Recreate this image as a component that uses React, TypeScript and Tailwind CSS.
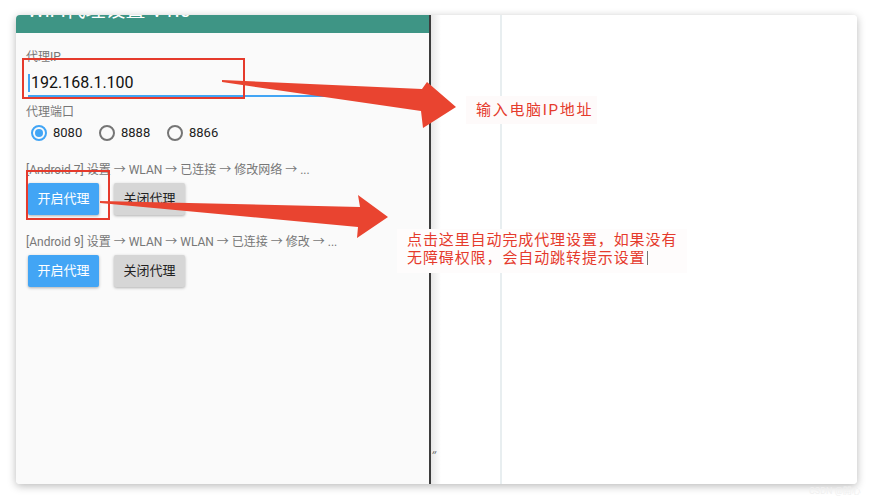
import React from 'react';

const FONT = "Roboto, 'Noto Sans CJK SC', sans-serif";

const Radio = ({ label, checked }: { label: string; checked?: boolean }) => (
  <div className="flex w-[68px] items-center">
    <span
      className={
        checked
          ? 'flex h-[16px] w-[16px] items-center justify-center rounded-full border-2 border-[#42a5f5]'
          : 'flex h-[16px] w-[16px] items-center justify-center rounded-full border-2 border-[#757575]'
      }
    >
      {checked && <span className="h-[8px] w-[8px] rounded-full bg-[#42a5f5]" />}
    </span>
    <span className="ml-[6px] text-[13px] leading-[20px] text-[#222]">{label}</span>
  </div>
);

const ButtonRow = () => (
  <div className="ml-[2px] flex gap-[15px]">
    <button className="h-[32px] w-[71px] rounded-[2px] bg-[#42a5f5] text-[13px] text-white shadow-[0_1px_3px_rgba(0,0,0,0.3)]">
      开启代理
    </button>
    <button className="h-[32px] w-[71px] rounded-[2px] bg-[#d6d6d6] text-[13px] text-[#222] shadow-[0_1px_3px_rgba(0,0,0,0.3)]">
      关闭代理
    </button>
  </div>
);

export default function App() {
  return (
    <div className="relative h-[500px] w-[873px] overflow-hidden bg-white pl-[16px] pt-[15px]" style={{ fontFamily: FONT }}>
      {/* window */}
      <div className="flex h-[469px] w-[841px] overflow-hidden rounded-[4px] bg-white shadow-[0_2px_9px_rgba(0,0,0,0.28)]">
        {/* phone app panel */}
        <div className="flex w-[413px] flex-col bg-[#fafafa]">
          <div className="h-[18px] overflow-hidden bg-[#3e9585] pl-[11px]">
            <div className="mt-[-15px] text-[20px] leading-[20px] text-white">WiFi代理设置 V1.0</div>
          </div>
          <div className="flex flex-col px-[10px]">
            <div className="mt-[16px] text-[12px] leading-[16px] text-[#777]">代理IP</div>
            <div className="relative ml-[2px] mt-[8px] flex h-[20px] items-center">
              <span className="mr-[1px] h-[18px] w-[2px] bg-[#42a5f5]" />
              <span className="text-[16px] leading-[20px] text-[#111]">192.168.1.100</span>
            </div>
            <div className="ml-[2px] mt-[2px] h-[2px] w-[395px] bg-[#42a5f5]" />
            <div className="mt-[7px] text-[12px] leading-[16px] text-[#777]">代理端口</div>
            <div className="ml-[5px] mt-[3px] flex h-[20px] items-center">
              <Radio label="8080" checked />
              <Radio label="8888" />
              <Radio label="8866" />
            </div>
            <div className="mt-[19px] text-[12px] leading-[16px] text-[#777]">
              [Android 7] 设置 → WLAN → 已连接 → 修改网络 → ...
            </div>
            <div className="mt-[5px]">
              <ButtonRow />
            </div>
            <div className="mt-[19px] text-[12px] leading-[16px] text-[#777]">
              [Android 9] 设置 → WLAN → WLAN → 已连接 → 修改 → ...
            </div>
            <div className="mt-[5px]">
              <ButtonRow />
            </div>
          </div>
        </div>
        {/* divider */}
        <div className="w-[2px] bg-[#3c3c3c]" />
        <div className="w-[10px] bg-gradient-to-r from-[#e8e8e8] to-white" />
        <div className="w-[59px] bg-white" />
        <div className="w-[2px] bg-[#e8eef0]" />
        <div className="flex-1 bg-white" />
      </div>

      {/* annotations */}
      <div className="absolute left-[22px] top-[58px] h-[41px] w-[223px] border-2 border-[#e53a2c]" />
      <div className="absolute left-[26px] top-[170px] h-[50px] w-[84px] border-2 border-[#e53a2c]" />

      <svg className="absolute left-0 top-0" width="873" height="500" viewBox="0 0 873 500">
        <polygon
          points="222,80 422,89 427,82 456,107 423,128 421,111 222,82"
          fill="#e94430"
        />
        <polygon
          points="100,201 360,207 358,195 388,217 357,238 358,227 100,203"
          fill="#e94430"
        />
      </svg>

      <div className="absolute left-[466px] top-[96px] flex h-[28px] w-[131px] items-center bg-[#fefafa] pl-[10px] text-[15px] tracking-[1.7px] text-[#e53a2c]">
        输入电脑IP地址
      </div>
      <div className="absolute left-[397px] top-[229px] h-[44px] w-[290px] bg-[#fefcfc] pl-[10px] pt-[2px] text-[15px] leading-[18px] tracking-[0.9px] text-[#e53a2c]">
        <div>点击这里自动完成代理设置，如果没有</div>
        <div className="flex items-center">
          无障碍权限，会自动跳转提示设置
          <span className="ml-[1px] h-[14px] w-[1px] bg-[#777]" />
        </div>
      </div>

      <div className="absolute left-[431px] top-[451px] text-[9px] italic leading-[10px] text-[#555]">״</div>
      <div className="absolute left-[809px] top-[486px] text-[9px] leading-[10px] text-[#f0f0f0]">CSDN @開心</div>
    </div>
  );
}
